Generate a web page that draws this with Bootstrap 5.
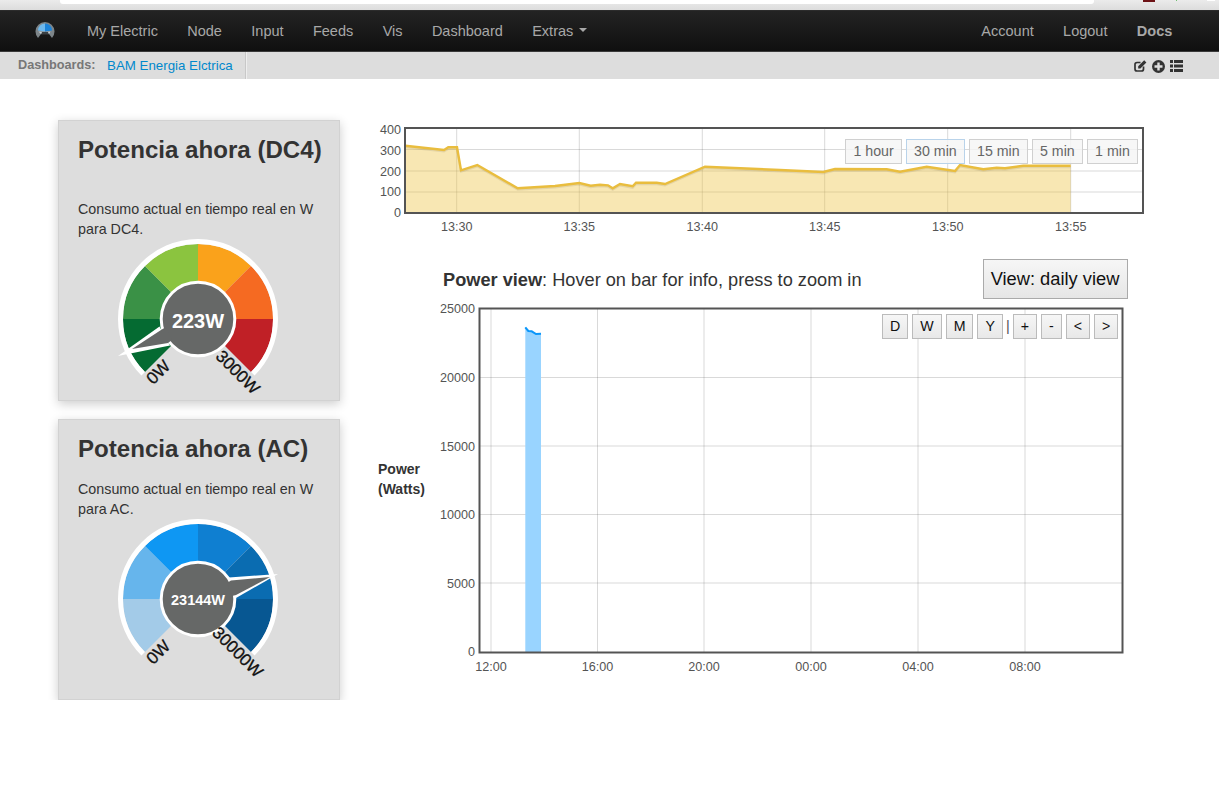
<!DOCTYPE html>
<html lang="en">
<head>
  <meta charset="UTF-8" />
  <meta name="viewport" content="width=device-width, initial-scale=1.0"/>
  <title>My Electric</title>
  <link href="https://cdn.jsdelivr.net/npm/bootstrap@5.3.3/dist/css/bootstrap.min.css" rel="stylesheet"/>
  <style>
    body {
      margin: 0;
      background: #fff;
      font-family: "Liberation Sans", Arial, sans-serif;
      font-size: 14.5px;
      color: #333;
    }

    .chrome-strip { height: 10px; background: linear-gradient(to bottom, #ebebeb, #dcdcdc); }
    .chrome-url { width: 1034px; height: 4px; margin-left: 60px; background: #fff; border-radius: 0 0 3px 3px; }
    .chrome-red { width: 12px; height: 2px; margin-left: 49px; background: #6d1216; }
    .chrome-green { width: 1px; height: 1px; margin-left: 21px; background: #6fbf6f; }
    .chrome-white { width: 8px; height: 1px; margin-left: 30px; background: #fff; }

    .top-nav {
      --bs-navbar-nav-link-padding-x: 14.7px;
      height: 42px;
      padding: 0;
      background: linear-gradient(to bottom, #232323, #0f0f0f);
      border-top: 1px solid #2c2c2c;
      border-bottom: 1px solid #3a3a3a;
    }
    .top-nav .nav-link { color: #a8a8a8; font-size: 14.5px; padding-top: 0; padding-bottom: 0; line-height: 38px; }
    .top-nav .nav-brand-mark { margin: -2px 17.3px 0 35px; display: block; }
    .top-nav .dropdown-toggle::after { margin-left: 6px; border-top-width: 4px; border-left-width: 4px; border-right-width: 4px; }
    .right-links { margin-right: 32px; }
    .docs-link { font-weight: 700; }

    .sub-nav { height: 27px; background: #ddd; line-height: 27px; font-size: 13.3px; }
    .sub-label { padding-left: 18px; font-size: 12.7px; font-weight: 700; color: #777; }
    .sub-link { padding: 0 12px 0 11.5px; border-right: 1px solid #c8c8c8; color: #0088cc; text-decoration: none; box-shadow: 1px 0 0 #eee; }
    .sub-icons { margin-right: 36px; padding-top: 1px; gap: 5px; }

    .page-body { padding: 41px 0 0 58px; }
    .left-col { width: 282px; gap: 18px; }
    .meter-card {
      height: 281px;
      padding: 14px 18px 0 19px;
      background: #ddd;
      border: 1px solid #d2d2d2;
      border-radius: 0;
      box-shadow: 0 3px 10px rgba(0,0,0,.2);
      color: #333;
    }
    .meter-title { margin: 0 0 15px; font-size: 24.1px; line-height: 30px; font-weight: 700; font-family: inherit; color: #333; white-space: nowrap; }
    .meter-title.tall { margin-bottom: 34px; }
    .meter-text { margin: 0; font-size: 14.3px; line-height: 20px; }
    .meter-gauge { display: block; margin-left: -20px; }

    .right-col { width: 775px; margin-left: 35px; }
    .chart-box { position: relative; }
    .chart-box svg { display: block; }
    .axis-text { font-family: "Liberation Sans", Arial, sans-serif; font-size: 12.6px; fill: #545454; }
    .axis-title { font-family: "Liberation Sans", Arial, sans-serif; font-size: 14px; font-weight: 700; fill: #333; }

    .range-btns { position: absolute; top: 19px; right: 12px; gap: 4px; }
    .range-btn {
      height: 25px;
      padding: 0 7.2px;
      font-size: 14.2px;
      line-height: 23px;
      color: #666;
      background: rgba(245,245,245,.82);
      border: 1px solid #d0d0d0;
      border-radius: 0;
    }
    .range-btn.on { border-color: #b9d3ea; }

    .power-head { margin-top: 19px; width: 752.5px; height: 41px; padding-left: 68px; }
    .power-text { padding-top: 2px; font-size: 18.2px; color: #333; }
    .view-btn {
      width: 145px;
      height: 40px;
      padding: 0;
      font-size: 18.3px;
      color: #111;
      background: linear-gradient(to bottom, #f6f6f6, #e6e6e6);
      border: 1px solid #aaa;
      border-radius: 0;
    }

    .zoom-btns { position: absolute; top: 14px; left: 507px; gap: 4px; }
    .zoom-btn {
      height: 25px;
      padding: 0 7px;
      font-size: 14.2px;
      line-height: 23px;
      color: #111;
      background: linear-gradient(to bottom, #f6f6f6, #e8e8e8);
      border: 1px solid #bbb;
      border-radius: 0;
    }
    .zoom-sep { color: #555; line-height: 25px; margin: 0 -1px; }

    .gauge-label { font-family: "Liberation Sans", Arial, sans-serif; font-size: 17px; fill: #111; stroke: #111; stroke-width: .3px; }
    .gauge-big { font-family: "Liberation Sans", Arial, sans-serif; font-size: 20px; font-weight: 700; fill: #fff; }
    .gauge-small { font-family: "Liberation Sans", Arial, sans-serif; font-size: 14.5px; font-weight: 700; fill: #fff; }
  </style>
</head>
<body>
  <div class="chrome-strip d-flex align-items-start">
    <div class="chrome-url"></div>
    <div class="chrome-red"></div>
    <div class="chrome-green"></div>
    <div class="chrome-white"></div>
  </div>

  <nav class="navbar navbar-expand top-nav">
    <svg class="nav-brand-mark" width="20" height="18" viewBox="0 0 20 18">
      <path d="M3 17 A9.5 9.5 0 1 1 17 17 L14 13 H6 Z" fill="#7d8589"/>
      <path d="M10 2.5 A7 7 0 0 1 17 9.5 L10 10.5 Z" fill="#1c83d8"/>
      <path d="M10 2.5 A7 7 0 0 0 3 9.5 L10 10.5 Z" fill="#6db8ec"/>
      <path d="M3.5 10.5 L10 11 L15.5 10.5 L14 13 H6 Z" fill="#c9d3d9"/>
      <path d="M7 11 H13 L14 13.5 H6 Z" fill="#3a3f42"/>
    </svg>
    <ul class="navbar-nav">
      <li class="nav-item"><a class="nav-link" href="#">My Electric</a></li>
      <li class="nav-item"><a class="nav-link" href="#">Node</a></li>
      <li class="nav-item"><a class="nav-link" href="#">Input</a></li>
      <li class="nav-item"><a class="nav-link" href="#">Feeds</a></li>
      <li class="nav-item"><a class="nav-link" href="#">Vis</a></li>
      <li class="nav-item"><a class="nav-link" href="#">Dashboard</a></li>
      <li class="nav-item"><a class="nav-link dropdown-toggle" href="#">Extras</a></li>
    </ul>
    <ul class="navbar-nav ms-auto right-links">
      <li class="nav-item"><a class="nav-link" href="#">Account</a></li>
      <li class="nav-item"><a class="nav-link" href="#">Logout</a></li>
      <li class="nav-item"><a class="nav-link docs-link" href="#">Docs</a></li>
    </ul>
  </nav>

  <div class="sub-nav d-flex align-items-stretch">
    <span class="sub-label">Dashboards:</span>
    <a class="sub-link" href="#">BAM Energia Elctrica</a>
    <div class="sub-icons d-flex align-items-center ms-auto">
      <svg width="13" height="12" viewBox="0 0 13 12">
        <path d="M9.5 6.5 V9 A2 2 0 0 1 7.5 11 H3 A2 2 0 0 1 1 9 V4.5 A2 2 0 0 1 3 2.5 H6.5" fill="none" stroke="#333" stroke-width="1.7"/>
        <path d="M4.2 6.2 L10.2 .2 L12.4 2.4 L6.4 8.4 H4.2 Z" fill="#333"/>
      </svg>
      <svg width="13" height="13" viewBox="0 0 13 13">
        <circle cx="6.5" cy="6.5" r="6.5" fill="#333"/>
        <path d="M5.3 2.5 H7.7 V5.3 H10.5 V7.7 H7.7 V10.5 H5.3 V7.7 H2.5 V5.3 H5.3 Z" fill="#ddd"/>
      </svg>
      <svg width="13" height="12" viewBox="0 0 13 12">
        <path d="M0 0 H3 V3 H0 Z M4 0 H13 V3 H4 Z M0 4.5 H3 V7.5 H0 Z M4 4.5 H13 V7.5 H4 Z M0 9 H3 V12 H0 Z M4 9 H13 V12 H4 Z" fill="#333"/>
      </svg>
    </div>
  </div>

  <div class="page-body d-flex align-items-start">
    <div class="left-col d-flex flex-column">
      <div class="card meter-card">
        <h3 class="meter-title tall">Potencia ahora (DC4)</h3>
        <p class="meter-text">Consumo actual en tiempo real en W para DC4.</p>
        <svg class="meter-gauge flex-shrink-0" width="280" height="170" viewBox="-140 -80 280 170">
          <path d="M0 0 L-53 53 A75 75 0 0 1 -75 0 Z" fill="#056b32"/>
          <path d="M0 0 L-75 0 A75 75 0 0 1 -53 -53 Z" fill="#3a9146"/>
          <path d="M0 0 L-53 -53 A75 75 0 0 1 0 -75 Z" fill="#8bc43f"/>
          <path d="M0 0 L0 -75 A75 75 0 0 1 53 -53 Z" fill="#faa21b"/>
          <path d="M0 0 L53 -53 A75 75 0 0 1 75 0 Z" fill="#f56a22"/>
          <path d="M0 0 L75 0 A75 75 0 0 1 53 53 Z" fill="#c02026"/>
          <path d="M-54.8 54.8 A77.5 77.5 0 1 1 54.8 54.8" fill="none" stroke="#fff" stroke-width="5"/>
          <circle r="36.8" fill="#666867" stroke="#fff" stroke-width="3"/>
          <path d="M-38.5 7.5 L-80 37 L-28 26.5 Z" fill="#fff"/>
          <path d="M-32 8 L-37 11 L-66 30 L-30 24 L-26 21 Z" fill="#666867"/>
          <text class="gauge-big" x="0" y="8.5" text-anchor="middle">223W</text>
          <text class="gauge-label" transform="translate(-40 53) rotate(-45)" text-anchor="middle" y="6">0W</text>
          <text class="gauge-label" transform="translate(40 53) rotate(45)" text-anchor="middle" y="6">3000W</text>
        </svg>
      </div>
      <div class="card meter-card">
        <h3 class="meter-title">Potencia ahora (AC)</h3>
        <p class="meter-text">Consumo actual en tiempo real en W para AC.</p>
        <svg class="meter-gauge flex-shrink-0" width="280" height="170" viewBox="-140 -80 280 170">
          <path d="M0 0 L-53 53 A75 75 0 0 1 -75 0 Z" fill="#a3cbe8"/>
          <path d="M0 0 L-75 0 A75 75 0 0 1 -53 -53 Z" fill="#66b5ec"/>
          <path d="M0 0 L-53 -53 A75 75 0 0 1 0 -75 Z" fill="#0e97f3"/>
          <path d="M0 0 L0 -75 A75 75 0 0 1 53 -53 Z" fill="#0f7fd1"/>
          <path d="M0 0 L53 -53 A75 75 0 0 1 75 0 Z" fill="#0a6cb1"/>
          <path d="M0 0 L75 0 A75 75 0 0 1 53 53 Z" fill="#075792"/>
          <path d="M-54.8 54.8 A77.5 77.5 0 1 1 54.8 54.8" fill="none" stroke="#fff" stroke-width="5"/>
          <circle r="36.8" fill="#666867" stroke="#fff" stroke-width="3"/>
          <path d="M31 -21.5 L80 -25 L38 -1 Z" fill="#fff"/>
          <path d="M29 -16 L33 -18.5 L72 -22 L38 -4 L34 -3 Z" fill="#666867"/>
          <text class="gauge-small" x="0" y="6" text-anchor="middle">23144W</text>
          <text class="gauge-label" transform="translate(-40 53) rotate(-45)" text-anchor="middle" y="6">0W</text>
          <text class="gauge-label" transform="translate(40 53) rotate(45)" text-anchor="middle" y="6">30000W</text>
        </svg>
      </div>
    </div>

    <div class="right-col">
      <div class="chart-box">
        <svg width="775" height="120" viewBox="375 120 775 120">
          <g stroke="rgba(84,84,84,.22)" stroke-width="1">
            <path d="M405 149.5 H1143 M405 171 H1143 M405 192 H1143"/>
            <path d="M456.7 128 V213 M579.3 128 V213 M702.3 128 V213 M824.7 128 V213 M947.7 128 V213 M1070.7 128 V213"/>
          </g>
          <path d="M405.3 145.7 L444 150 L448.3 147.3 L457 147.3 L461 170.3 L477.3 165 L517.7 188.3 L555 186 L579.3 183 L590.7 185.7 L600 184.7 L608 185.3 L612.7 188.3 L620 184 L632.7 186.3 L636 182.7 L656.7 182.7 L665 184 L705 166.7 L780 170 L823.3 172 L835 169 L886.7 169.3 L900 171.7 L926.7 166.7 L955 171 L960 165 L983.3 169.3 L996.7 167.7 L1005 168.3 L1023.3 165.7 L1070.7 165.7 V213 H405.3 Z" fill="rgba(237,194,64,.4)"/>
          <path d="M405.3 147.2 L444 151.5 L448.3 148.8 L457 148.8 L461 171.8 L477.3 166.5 L517.7 189.8 L555 187.5 L579.3 184.5 L590.7 187.2 L600 186.2 L608 186.8 L612.7 189.8 L620 185.5 L632.7 187.8 L636 184.2 L656.7 184.2 L665 185.5 L705 168.2 L780 171.5 L823.3 173.5 L835 170.5 L886.7 170.8 L900 173.2 L926.7 168.2 L955 172.5 L960 166.5 L983.3 170.8 L996.7 169.2 L1005 169.8 L1023.3 167.2 L1070.7 167.2" fill="none" stroke="rgba(0,0,0,.08)" stroke-width="2"/>
          <path d="M405.3 145.7 L444 150 L448.3 147.3 L457 147.3 L461 170.3 L477.3 165 L517.7 188.3 L555 186 L579.3 183 L590.7 185.7 L600 184.7 L608 185.3 L612.7 188.3 L620 184 L632.7 186.3 L636 182.7 L656.7 182.7 L665 184 L705 166.7 L780 170 L823.3 172 L835 169 L886.7 169.3 L900 171.7 L926.7 166.7 L955 171 L960 165 L983.3 169.3 L996.7 167.7 L1005 168.3 L1023.3 165.7 L1070.7 165.7" fill="none" stroke="#e9bd3e" stroke-width="2.4"/>
          <rect x="405" y="128" width="738" height="85" fill="none" stroke="#545454" stroke-width="2"/>
          <g class="axis-text" text-anchor="end">
            <text x="401" y="133.5">400</text>
            <text x="401" y="154.5">300</text>
            <text x="401" y="175.5">200</text>
            <text x="401" y="196">100</text>
            <text x="401" y="217">0</text>
          </g>
          <g class="axis-text" text-anchor="middle">
            <text x="456.7" y="231">13:30</text>
            <text x="579.3" y="231">13:35</text>
            <text x="702.3" y="231">13:40</text>
            <text x="824.7" y="231">13:45</text>
            <text x="947.7" y="231">13:50</text>
            <text x="1070.7" y="231">13:55</text>
          </g>
        </svg>
        <div class="range-btns d-flex">
          <button class="btn range-btn">1 hour</button>
          <button class="btn range-btn on">30 min</button>
          <button class="btn range-btn">15 min</button>
          <button class="btn range-btn">5 min</button>
          <button class="btn range-btn">1 min</button>
        </div>
      </div>

      <div class="power-head d-flex align-items-center justify-content-between">
        <div class="power-text"><b>Power view</b>: Hover on bar for info, press to zoom in</div>
        <button class="btn view-btn align-self-start">View: daily view</button>
      </div>

      <div class="chart-box">
        <svg width="760" height="380" viewBox="375 300 760 380">
          <g stroke="rgba(84,84,84,.22)" stroke-width="1">
            <path d="M479 377.5 H1123 M479 446 H1123 M479 514.5 H1123 M479 583 H1123"/>
            <path d="M491 308 V652 M597.5 308 V652 M704 308 V652 M811 308 V652 M918 308 V652 M1025 308 V652"/>
          </g>
          <path d="M525.3 327.3 L528.3 331 L531.7 331.3 L536 334 L541 333.7 V652 H525.3 Z" fill="#99d4ff"/>
          <path d="M525.3 327.3 L528.3 331 L531.7 331.3 L536 334 L541 333.7" fill="none" stroke="#0a96fa" stroke-width="2"/>
          <rect x="479.5" y="308.5" width="643" height="344" fill="none" stroke="#545454" stroke-width="2"/>
          <g class="axis-text" text-anchor="end">
            <text x="475" y="313">25000</text>
            <text x="475" y="382">20000</text>
            <text x="475" y="450.5">15000</text>
            <text x="475" y="519">10000</text>
            <text x="475" y="587.5">5000</text>
            <text x="475" y="656">0</text>
          </g>
          <g class="axis-text" text-anchor="middle">
            <text x="491" y="671">12:00</text>
            <text x="597.5" y="671">16:00</text>
            <text x="704" y="671">20:00</text>
            <text x="811" y="671">00:00</text>
            <text x="918" y="671">04:00</text>
            <text x="1025" y="671">08:00</text>
          </g>
          <text class="axis-title" x="378" y="474">Power</text>
          <text class="axis-title" x="378" y="494">(Watts)</text>
        </svg>
        <div class="zoom-btns d-flex">
          <button class="btn zoom-btn">D</button>
          <button class="btn zoom-btn">W</button>
          <button class="btn zoom-btn">M</button>
          <button class="btn zoom-btn">Y</button>
          <span class="zoom-sep">|</span>
          <button class="btn zoom-btn">+</button>
          <button class="btn zoom-btn">-</button>
          <button class="btn zoom-btn">&lt;</button>
          <button class="btn zoom-btn">&gt;</button>
        </div>
      </div>
    </div>
  </div>

  <script src="https://cdn.jsdelivr.net/npm/bootstrap@5.3.3/dist/js/bootstrap.bundle.min.js"></script>
</body>
</html>
